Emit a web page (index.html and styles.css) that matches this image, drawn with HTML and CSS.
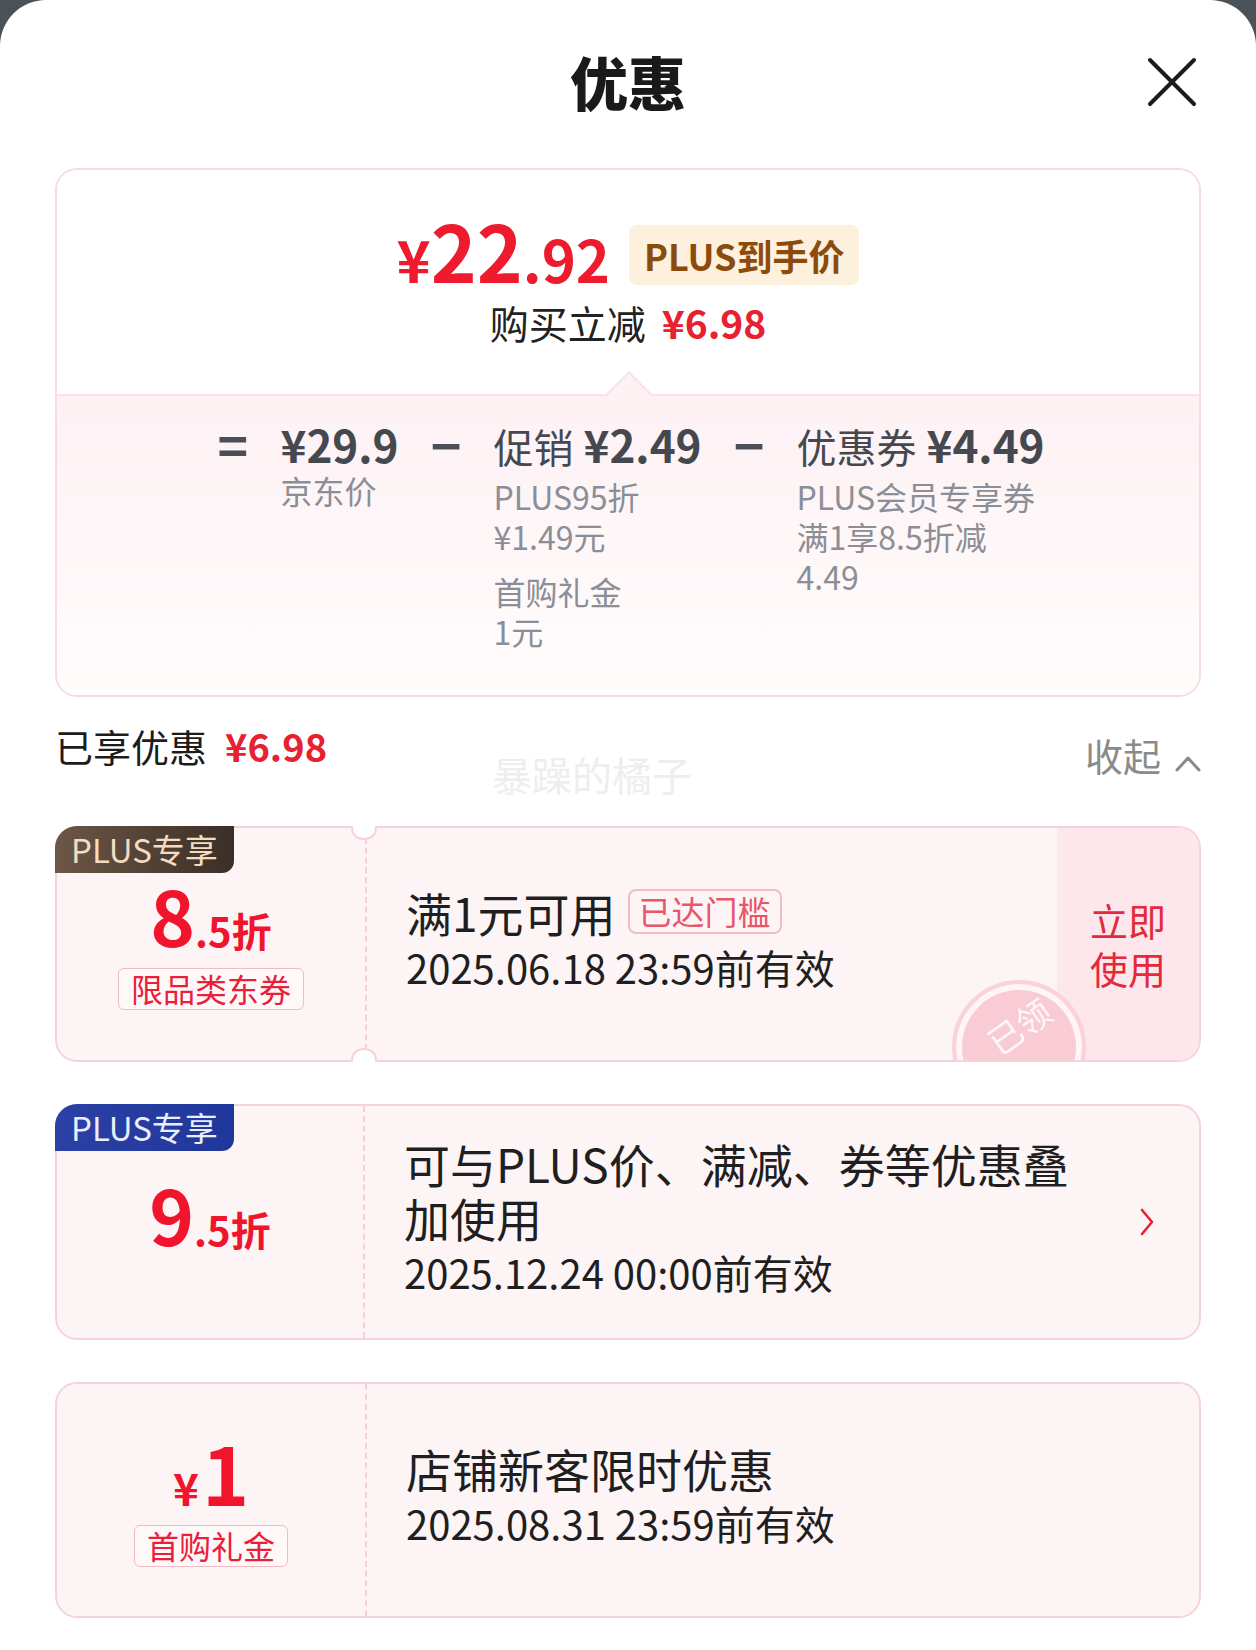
FILE: index.html
```html
<!DOCTYPE html>
<html lang="zh-CN">
<head>
<meta charset="utf-8">
<title>优惠</title>
<link rel="stylesheet" href="styles.css">
</head>
<body>
<div class="sheet">
  <header class="hdr">
    <span class="hdr-side"></span>
    <h1 class="hdr-title">优惠</h1>
    <span class="hdr-close">
      <svg width="50" height="50" viewBox="0 0 50 50"><path d="M3 3 L47 47 M47 3 L3 47" stroke="#1c1c1c" stroke-width="4" stroke-linecap="round" fill="none"/></svg>
    </span>
  </header>

  <section class="summary">
    <div class="sum-top">
      <div class="price-row">
        <span class="price"><span class="p-yen">¥</span><span class="p-int">22</span><span class="p-dec">.92</span></span>
        <span class="plus-badge">PLUS到手价</span>
      </div>
      <div class="save-row">购买立减<span class="save-amt">¥6.98</span></div>
    </div>
    <div class="sum-bottom">
      <span class="op">=</span>
      <div class="term term-first">
        <div class="term-main"><span class="amt">¥29.9</span></div>
        <div class="term-sub">京东价</div>
      </div>
      <span class="op">−</span>
      <div class="term">
        <div class="term-main"><span class="lbl">促销</span> <span class="amt">¥2.49</span></div>
        <div class="term-sub">PLUS95折</div>
        <div class="term-sub">¥1.49元</div>
        <div class="term-sub term-gap">首购礼金</div>
        <div class="term-sub">1元</div>
      </div>
      <span class="op">−</span>
      <div class="term">
        <div class="term-main"><span class="lbl">优惠券</span> <span class="amt">¥4.49</span></div>
        <div class="term-sub">PLUS会员专享券</div>
        <div class="term-sub">满1享8.5折减</div>
        <div class="term-sub">4.49</div>
      </div>
    </div>
  </section>

  <div class="enjoyed-row">
    <div class="enjoyed">已享优惠<span class="enjoyed-amt">¥6.98</span></div>
    <div class="watermark">暴躁的橘子</div>
    <div class="collapse">收起
      <svg class="collapse-icon" width="26" height="18" viewBox="0 0 26 18"><path d="M2 16 L13 4 L24 16" stroke="#8a8a8a" stroke-width="3" fill="none" stroke-linecap="round" stroke-linejoin="round"/></svg>
    </div>
  </div>

  <div class="coupons">
    <div class="coupon coupon-notched">
      <span class="plus-tag plus-brown">PLUS专享</span>
      <div class="c-left">
        <div class="disc"><span class="disc-big">8</span><span class="disc-small">.5折</span></div>
        <span class="c-label">限品类东券</span>
      </div>
      <div class="c-mid">
        <div class="c-title">满1元可用<span class="reached">已达门槛</span></div>
        <div class="c-date">2025.06.18 23:59前有效</div>
      </div>
      <div class="c-action">立即<br>使用</div>
      <div class="stamp-clip"><div class="stamp"><span class="stamp-text">已领</span></div></div>
    </div>

    <div class="coupon">
      <span class="plus-tag plus-blue">PLUS专享</span>
      <div class="c-left c-left-solo">
        <div class="disc"><span class="disc-big">9</span><span class="disc-small">.5折</span></div>
      </div>
      <div class="c-mid">
        <div class="c-title c-title-wrap">可与PLUS价、满减、券等优惠叠加使用</div>
        <div class="c-date">2025.12.24 00:00前有效</div>
      </div>
      <div class="c-arrow">
        <svg width="16" height="28" viewBox="0 0 16 28"><path d="M3 2 L13 14 L3 26" stroke="#e8202f" stroke-width="2.6" fill="none" stroke-linecap="round" stroke-linejoin="round"/></svg>
      </div>
    </div>

    <div class="coupon">
      <div class="c-left">
        <div class="cash"><span class="cash-yen">¥</span><span class="cash-big">1</span></div>
        <span class="c-label c-label-cash">首购礼金</span>
      </div>
      <div class="c-mid">
        <div class="c-title">店铺新客限时优惠</div>
        <div class="c-date">2025.08.31 23:59前有效</div>
      </div>
    </div>
  </div>
</div>
</body>
</html>
```

FILE: styles.css
```css
html, body {
  margin: 0;
  padding: 0;
}
body {
  background: #4a5157;
  font-family: "Noto Sans CJK SC", "Noto Sans", sans-serif;
  color: #1c1c1c;
}
.sheet {
  background: #ffffff;
  border-radius: 46px 46px 0 0;
  min-height: 1650px;
  padding: 0 55px;
  box-sizing: border-box;
}

/* header */
.hdr {
  height: 168px;
  display: grid;
  grid-template-columns: 1fr auto 1fr;
  align-items: center;
}
.hdr-title {
  margin: 0 0 6px;
  font-size: 58px;
  font-weight: 900;
  line-height: 1;
  color: #1a1a1a;
}
.hdr-close {
  justify-self: end;
  margin-right: 4px;
  margin-bottom: 4px;
  display: flex;
}

/* summary card */
.summary {
  border: 2px solid #f8dbe2;
  border-radius: 22px;
  overflow: hidden;
}
.sum-top {
  padding: 45px 0 47px;
  text-align: center;
  background: #fff;
}
.price-row {
  height: 80px;
  margin-bottom: 2px;
  display: flex;
  justify-content: center;
  align-items: center;
  gap: 19px;
}
.price {
  display: inline-flex;
  align-items: baseline;
  color: #ee1b2e;
  font-weight: 700;
  line-height: 1;
  margin-bottom: 12px;
}
.p-yen { font-size: 58px; }
.p-int { font-size: 78px; }
.p-dec { font-size: 58px; }
.plus-badge {
  height: 60px;
  line-height: 60px;
  padding: 0 15px;
  background: #fdf0dc;
  color: #8b4b0d;
  font-size: 36px;
  font-weight: 700;
  border-radius: 8px;
}
.save-row {
  font-size: 39px;
  line-height: 50px;
  color: #222;
}
.save-amt {
  margin-left: 16px;
  color: #e8202f;
  font-weight: 700;
}

.sum-bottom {
  position: relative;
  border-top: 2px solid #fae3e8;
  background: linear-gradient(#fdf1f4, #fffcfc);
  padding: 22px 0 44px 6px;
  display: flex;
  justify-content: center;
  align-items: flex-start;
  gap: 32px;
}
.sum-bottom::before {
  content: "";
  position: absolute;
  left: 50%;
  top: -18px;
  width: 32px;
  height: 32px;
  margin-left: -16px;
  background: #fdf1f4;
  border-top: 2px solid #fae3e8;
  border-left: 2px solid #fae3e8;
  transform: rotate(45deg);
}
.op {
  width: 31px;
  text-align: center;
  font-size: 52px;
  line-height: 52px;
  font-weight: 700;
  color: #4b4e56;
}
.term-main {
  font-size: 44px;
  line-height: 52px;
  margin-bottom: 4px;
  color: #45484f;
  white-space: nowrap;
}
.term-first .term-main { margin-bottom: 0; }
.lbl { font-size: 40px; }
.amt { font-weight: 700; }
.term-sub {
  font-size: 32px;
  line-height: 40px;
  color: #8b8e96;
  white-space: nowrap;
}
.term-gap { margin-top: 15px; }

/* enjoyed row */
.enjoyed-row {
  position: relative;
  height: 129px;
  display: flex;
  justify-content: space-between;
  align-items: flex-start;
}
.enjoyed {
  margin-top: 24px;
  font-size: 38px;
  line-height: 50px;
  color: #1c1c1c;
}
.enjoyed-amt {
  margin-left: 18px;
  color: #e8202f;
  font-weight: 700;
}
.watermark {
  position: absolute;
  left: 437px;
  top: 52px;
  font-size: 40px;
  line-height: 50px;
  color: #eeeeee;
}
.collapse {
  margin-top: 33px;
  font-size: 38px;
  line-height: 50px;
  color: #8a8a8a;
  display: flex;
  align-items: center;
  gap: 14px;
}
.collapse-icon { margin-top: 15px; }

/* coupons */
.coupons {
  display: flex;
  flex-direction: column;
  gap: 42px;
}
.coupon {
  position: relative;
  height: 236px;
  box-sizing: border-box;
  border: 2px solid #f6d3db;
  border-radius: 22px;
  background: #fdf4f6;
  display: flex;
}
.coupon-notched::before,
.coupon-notched::after {
  content: "";
  position: absolute;
  left: 294px;
  width: 22px;
  height: 12px;
  background: #fff;
  border: 2px solid #f6d3db;
  z-index: 2;
}
.coupon-notched::before {
  top: -2px;
  border-top: none;
  border-radius: 0 0 12px 12px;
}
.coupon-notched::after {
  bottom: -2px;
  border-bottom: none;
  border-radius: 12px 12px 0 0;
}
.plus-tag {
  position: absolute;
  top: -2px;
  left: -2px;
  height: 47px;
  line-height: 47px;
  padding: 0 16px;
  font-size: 33px;
  border-radius: 22px 0 12px 0;
  z-index: 3;
}
.plus-brown {
  background: linear-gradient(90deg, #6d5746, #3a2e27);
  color: #f3dcc0;
}
.plus-blue {
  background: linear-gradient(90deg, #2c40a6, #1f379a);
  color: #eaedfa;
}
.c-left {
  width: 308px;
  flex: none;
  border-right: 2px dashed #f3d0d8;
  display: flex;
  flex-direction: column;
  align-items: center;
  justify-content: center;
}
.c-left-solo { padding-bottom: 18px; box-sizing: border-box; }
.disc, .cash {
  display: flex;
  align-items: baseline;
  color: #f0142d;
  font-weight: 700;
}
.disc-big { font-size: 76px; line-height: 70px; }
.disc-small { font-size: 40px; line-height: 1; }
.cash-yen { font-size: 44px; line-height: 1; margin-right: 3px; }
.cash-big { font-size: 80px; line-height: 76px; }
.c-label {
  margin-top: 18px;
  height: 42px;
  line-height: 39px;
  box-sizing: border-box;
  padding: 0 12px;
  font-size: 32px;
  color: #e8203a;
  background: #fff8f9;
  border: 1.5px solid #f3b9c4;
  border-radius: 6px;
}
.c-label-cash { margin-top: 16px; }
.c-mid {
  flex: 1;
  min-width: 0;
  padding: 0 0 8px 39px;
  display: flex;
  flex-direction: column;
  justify-content: center;
}
.c-title {
  font-size: 46px;
  line-height: 54px;
  color: #1f1f1f;
}
.c-title-wrap { max-width: 680px; }
.reached {
  display: inline-block;
  vertical-align: top;
  margin: 4px 0 0 12px;
  height: 45px;
  line-height: 41px;
  box-sizing: border-box;
  padding: 0 9px;
  font-size: 33px;
  color: #e8566a;
  border: 2px solid #f2bcc7;
  border-radius: 8px;
}
.c-date {
  font-size: 40px;
  line-height: 56px;
  color: #1f1f1f;
}
.c-action {
  width: 142px;
  flex: none;
  background: #fde6ec;
  border-radius: 0 20px 20px 0;
  display: flex;
  align-items: center;
  justify-content: center;
  text-align: center;
  font-size: 38px;
  line-height: 48px;
  color: #e22a3a;
  position: relative;
  z-index: 1;
}
.c-arrow {
  align-self: center;
  margin-right: 44px;
  display: flex;
}
.stamp-clip {
  position: absolute;
  inset: 0;
  overflow: hidden;
  border-radius: 20px;
  pointer-events: none;
  z-index: 1;
}
.stamp {
  position: absolute;
  left: 895px;
  top: 152px;
  width: 134px;
  height: 134px;
  box-sizing: border-box;
  border-radius: 50%;
  border: 4px solid #f9d2da;
  background: #f9cbd4;
  box-shadow: inset 0 0 0 6px #fff5f7;
  display: flex;
  justify-content: center;
}
.stamp-text {
  margin-top: 22px;
  font-size: 34px;
  line-height: 40px;
  height: 40px;
  color: rgba(255, 255, 255, 0.85);
  transform: rotate(-35deg);
}
```
